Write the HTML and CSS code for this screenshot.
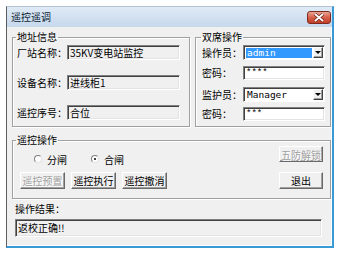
FILE: index.html
```html
<!DOCTYPE html>
<html lang="zh-CN">
<head>
  <meta charset="UTF-8">
  <title>遥控遥调</title>
  <link rel="stylesheet" href="styles.css">
</head>
<body>

  <div class="window">
    <div class="titlebar">
      <span class="title">遥控遥调</span>
      <span class="close">
        <svg width="12" height="9" viewBox="0 0 12 9">
          <path d="M2 1 L10 8 M10 1 L2 8" stroke="#6b1d12" stroke-width="3.2"/>
          <path d="M2 1 L10 8 M10 1 L2 8" stroke="#fff" stroke-width="1.8"/>
        </svg>
      </span>
    </div>

    <div class="client">
      <div class="top-row">
        <fieldset class="group group-addr">
          <legend>地址信息</legend>
          <div class="field">
            <label>厂站名称：</label>
            <div class="edit readonly">35KV变电站监控</div>
          </div>
          <div class="field">
            <label>设备名称：</label>
            <div class="edit readonly">进线柜1</div>
          </div>
          <div class="field">
            <label>遥控序号：</label>
            <div class="edit readonly">合位</div>
          </div>
        </fieldset>

        <fieldset class="group group-dual">
          <legend>双席操作</legend>
          <div class="field">
            <label>操作员：</label>
            <div class="combo">
              <span class="combo-text selected">admin</span>
              <span class="drop"></span>
            </div>
          </div>
          <div class="field row-pass1">
            <label>密码：</label>
            <div class="edit mono">****</div>
          </div>
          <div class="field row-guard">
            <label>监护员：</label>
            <div class="combo">
              <span class="combo-text">Manager</span>
              <span class="drop"></span>
            </div>
          </div>
          <div class="field row-pass2">
            <label>密码：</label>
            <div class="edit mono">***</div>
          </div>
        </fieldset>
      </div>

      <fieldset class="group group-ctrl">
        <legend>遥控操作</legend>
        <div class="ctrl">
          <div class="ctrl-left">
            <div class="radios">
              <span class="radio"></span><span class="radio-label">分闸</span>
              <span class="radio checked"></span><span class="radio-label">合闸</span>
            </div>
            <div class="buttons">
              <button class="btn disabled">遥控预置</button>
              <button class="btn">遥控执行</button>
              <button class="btn">遥控撤消</button>
            </div>
          </div>
          <div class="ctrl-right">
            <button class="btn disabled btn-unlock">五防解锁</button>
            <button class="btn btn-exit">退出</button>
          </div>
        </div>
      </fieldset>

      <div class="result-label">操作结果：</div>
      <div class="edit readonly result">返校正确!!</div>
    </div>
  </div>

</body>
</html>
```

FILE: styles.css
```css
body {
  margin: 0;
  background: #fff;
  font-family: "Noto Sans CJK SC", "Noto Sans", sans-serif;
  font-size: 10px;
  color: #000;
}

.window {
  margin: 6px 0 0 6px;
  width: 328px;
  height: 242px;
  box-sizing: border-box;
  border-top: 1px solid #b4c4d6;
  border-left: 1px solid #5c5c5c;
  border-right: 2px solid #3a9ad6;
  border-bottom: 2px solid #3a9ad6;
  display: flex;
  flex-direction: column;
}

.titlebar {
  height: 20px;
  flex: none;
  display: flex;
  align-items: flex-start;
  background: linear-gradient(#dfeaf6, #c6d8ec);
}

.title {
  margin: 3px 0 0 4px;
  line-height: 14px;
  color: #0c1d33;
}

.close {
  margin: 4px 1px 0 auto;
  width: 24px;
  height: 13px;
  box-sizing: border-box;
  border: 1px solid #7c2a1e;
  border-radius: 3px;
  background: linear-gradient(#e9a594, #d6604a 50%, #c13e28);
  display: flex;
  align-items: center;
  justify-content: center;
}

.client {
  flex: 1;
  background: #f0f0f0;
  padding: 0 1px 0 5px;
  box-shadow: inset -1px -1px 0 #fff;
}

.top-row {
  display: flex;
  gap: 5px;
  margin-top: 3px;
}

/* group boxes */
.group {
  margin: 0;
  padding: 0 3px;
  min-width: 0;
  border: 1px solid #a0a0a0;
  box-shadow: inset 1px 1px 0 #fff, 1px 1px 0 #fff;
}

.group legend {
  padding: 0 1px;
  line-height: 14px;
}

.group-addr {
  width: 178px;
  box-sizing: border-box;
  padding-top: 1px;
  padding-bottom: 6px;
}

.group-dual {
  width: 136px;
  box-sizing: border-box;
  padding-top: 1px;
  padding-bottom: 5px;
  padding-left: 5px;
}

.field {
  display: flex;
  align-items: center;
  height: 15px;
}

.group-addr .field + .field {
  margin-top: 15px;
}

.field label {
  flex: none;
  margin-left: 1px;
}

.group-addr label {
  width: 50px;
}

.group-dual label {
  width: 41px;
}

.row-pass1 { margin-top: 5px; }
.row-guard { margin-top: 7px; }
.row-pass2 { margin-top: 4px; }

/* sunken edit boxes */
.edit {
  height: 15px;
  box-sizing: border-box;
  border: 1px solid;
  border-color: #808080 #fff #fff #808080;
  box-shadow: inset 1px 1px 0 #404040, inset -1px -1px 0 #e3e3e3;
  background: #fff;
  padding-left: 2px;
  line-height: 13px;
  white-space: nowrap;
  overflow: hidden;
}

.readonly {
  background: #f0f0f0;
}

.group-addr .edit {
  width: 113px;
}

.group-dual .edit,
.group-dual .combo {
  width: 82px;
}

.mono {
  font-family: "Liberation Mono", monospace;
  font-size: 9px;
  height: 14px;
  line-height: 12px;
}

.combo {
  height: 15px;
  box-sizing: border-box;
  border: 1px solid;
  border-color: #808080 #fff #fff #808080;
  box-shadow: inset 1px 1px 0 #404040;
  background: #fff;
  display: flex;
  padding: 2px 1px 1px 2px;
  gap: 1px;
}

.combo-text {
  flex: 1;
  font-family: "DejaVu Sans Mono", monospace;
  font-size: 9.5px;
  line-height: 10px;
  padding-left: 1px;
}

.combo-text.selected {
  background: #3399ff;
  color: #fff;
}

.drop {
  width: 10px;
  margin-top: -1px;
  box-sizing: border-box;
  background: #f0f0f0;
  border: 1px solid;
  border-color: #fff #404040 #404040 #fff;
  box-shadow: inset -1px -1px 0 #a0a0a0;
  display: flex;
  align-items: center;
  justify-content: center;
}

.drop::after {
  content: "";
  border-left: 3px solid transparent;
  border-right: 3px solid transparent;
  border-top: 3px solid #000;
}

/* remote control group */
.group-ctrl {
  margin-top: 6px;
  padding-bottom: 9px;
}

.ctrl {
  display: flex;
}

.ctrl-left {
  padding-top: 5px;
}

.radios {
  display: flex;
  align-items: center;
  height: 14px;
}

.radio {
  width: 8px;
  height: 8px;
  box-sizing: border-box;
  border-radius: 50%;
  border: 1px solid;
  border-color: #808080 #e3e3e3 #e3e3e3 #808080;
  background: #fff;
  margin-left: 18px;
  margin-right: 5px;
  display: flex;
  align-items: center;
  justify-content: center;
}

.radio + .radio-label + .radio {
  margin-left: 24px;
}

.radio.checked::after {
  content: "";
  width: 2px;
  height: 2px;
  border-radius: 50%;
  background: #000;
}

.buttons {
  display: flex;
  gap: 6px;
  margin: 6px 0 0 4px;
}

.btn {
  margin: 0;
  padding: 0;
  width: 45px;
  height: 17px;
  box-sizing: border-box;
  font: inherit;
  line-height: 13px;
  color: #000;
  background: #f0f0f0;
  border: 1px solid;
  border-color: #fff #696969 #696969 #fff;
  box-shadow: inset -1px -1px 0 #a0a0a0;
}

.btn.disabled {
  color: #a0a0a0;
  text-shadow: 1px 1px 0 #fff;
}

.ctrl-right {
  margin: -1px 4px 0 auto;
  display: flex;
  flex-direction: column;
  gap: 10px;
}

.btn-unlock {
  width: 44px;
  height: 16px;
}

.btn-exit {
  width: 44px;
}

.result-label {
  margin: 3px 0 0 3px;
  line-height: 14px;
}

.result {
  margin: 3px 9px 0 3px;
  height: 18px;
  line-height: 16px;
}
```
